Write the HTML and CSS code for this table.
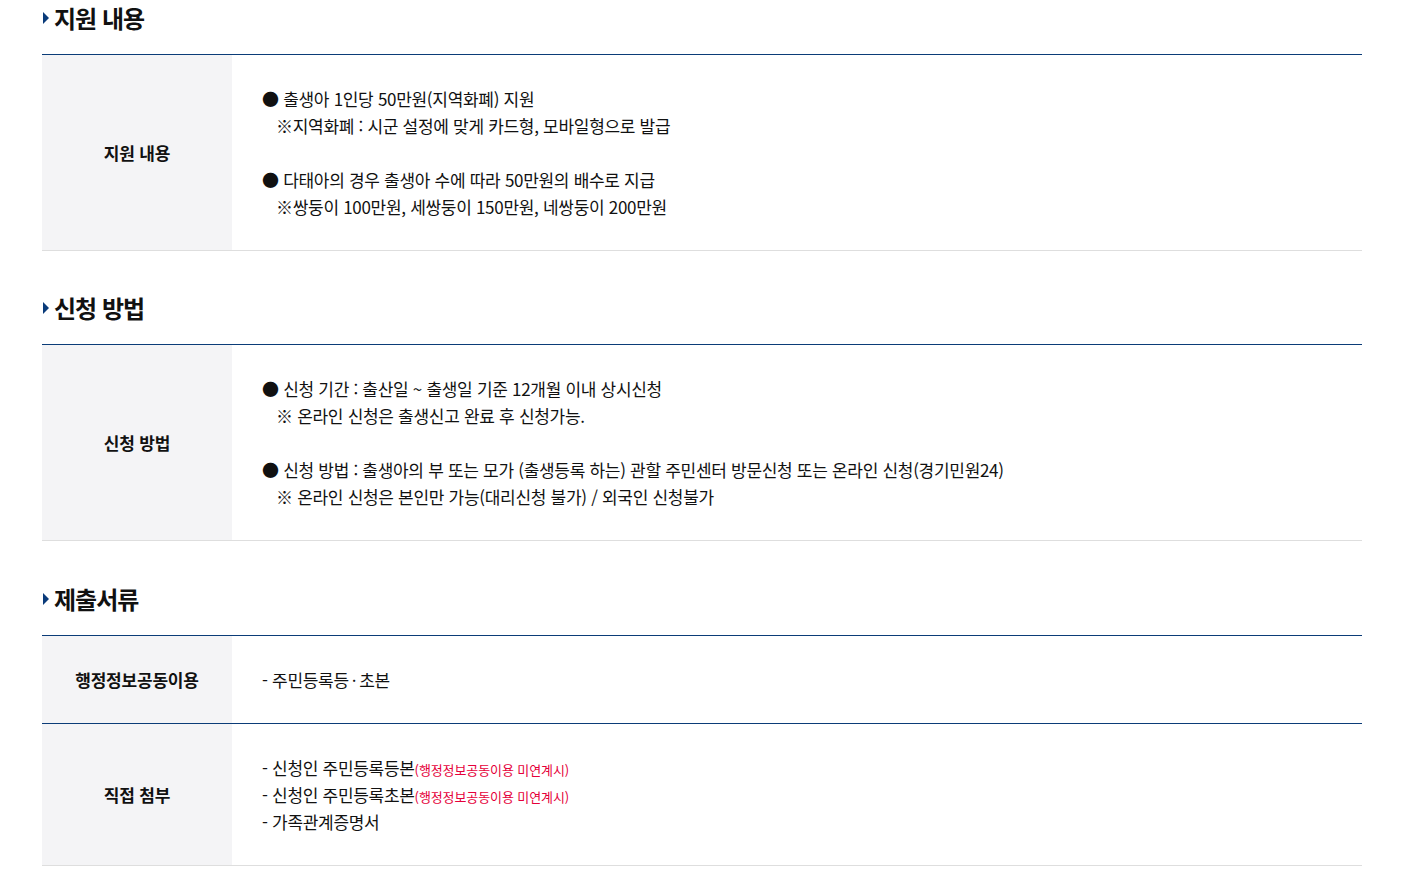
FILE: index.html
```html
<!DOCTYPE html>
<html lang="ko">
<head>
<meta charset="utf-8">
<link rel="stylesheet" href="styles.css">
</head>
<body>
<div class="wrap">
  <h3 class="sec-title">지원 내용</h3>
  <table class="info">
    <tr>
      <th>지원 내용</th>
      <td>
        <p>● 출생아 1인당 50만원(지역화폐) 지원</p>
        <p class="note">※지역화폐 : 시군 설정에 맞게 카드형, 모바일형으로 발급</p>
        <p class="blank">&nbsp;</p>
        <p>● 다태아의 경우 출생아 수에 따라 50만원의 배수로 지급</p>
        <p class="note">※쌍둥이 100만원, 세쌍둥이 150만원, 네쌍둥이 200만원</p>
      </td>
    </tr>
  </table>

  <h3 class="sec-title">신청 방법</h3>
  <table class="info">
    <tr>
      <th>신청 방법</th>
      <td>
        <p>● 신청 기간 : 출산일 ~ 출생일 기준 12개월 이내 상시신청</p>
        <p class="note">※ 온라인 신청은 출생신고 완료 후 신청가능.</p>
        <p class="blank">&nbsp;</p>
        <p>● 신청 방법 : 출생아의 부 또는 모가 (출생등록 하는) 관할 주민센터 방문신청 또는 온라인 신청(경기민원24)</p>
        <p class="note">※ 온라인 신청은 본인만 가능(대리신청 불가) / 외국인 신청불가</p>
      </td>
    </tr>
  </table>

  <h3 class="sec-title sec-docs">제출서류</h3>
  <table class="info">
    <tr class="navy-bottom">
      <th>행정정보공동이용</th>
      <td><p>- 주민등록등<span class="mdot">·</span>초본</p></td>
    </tr>
    <tr>
      <th>직접 첨부</th>
      <td>
        <p>- 신청인 주민등록등본<span class="red">(행정정보공동이용 미연계시)</span></p>
        <p>- 신청인 주민등록초본<span class="red">(행정정보공동이용 미연계시)</span></p>
        <p>- 가족관계증명서</p>
      </td>
    </tr>
  </table>
</div>
</body>
</html>
```

FILE: styles.css
```css
* { box-sizing: border-box; }
html, body { margin: 0; padding: 0; background: #fff; }
body {
  font-family: "Noto Sans CJK KR", "Noto Sans", sans-serif;
  color: #111;
}
.wrap {
  width: 1320px;
  margin-left: 42px;
}
.sec-title {
  position: relative;
  margin: 0;
  padding: 0 0 0 12px;
  height: 54px;
  line-height: 36px;
  font-size: 24px;
  font-weight: 700;
  letter-spacing: -1px;
  color: #111;
}
.sec-title::before {
  content: "";
  position: absolute;
  left: 1px;
  top: 12px;
  border-style: solid;
  border-width: 6px 0 6px 6px;
  border-color: transparent transparent transparent #0a3b7a;
}
.info + .sec-title { margin-top: 39px; }
.info + .sec-docs { margin-top: 40px; }
.info {
  width: 100%;
  border-collapse: collapse;
  border-top: 1px solid #0b3c78;
  border-bottom: 1px solid #dedede;
}
.info th {
  width: 190px;
  background: #f4f4f6;
  font-size: 17px;
  font-weight: 700;
  letter-spacing: -0.2px;
  text-align: center;
  vertical-align: middle;
  padding: 0;
  color: #111;
}
.info td {
  padding: 30px 30px;
  font-size: 17px;
  letter-spacing: -0.3px;
  line-height: 27px;
  vertical-align: middle;
  color: #111;
}
.info td p { margin: 0; height: 27px; }
.info td .note { padding-left: 14px; }
.mdot { margin: 0 3px; }
.navy-bottom th, .navy-bottom td { border-bottom: 1px solid #0b3c78; }
.red {
  color: #e5003a;
  font-size: 13px;
  line-height: 1;
  letter-spacing: -0.1px;
}
```
